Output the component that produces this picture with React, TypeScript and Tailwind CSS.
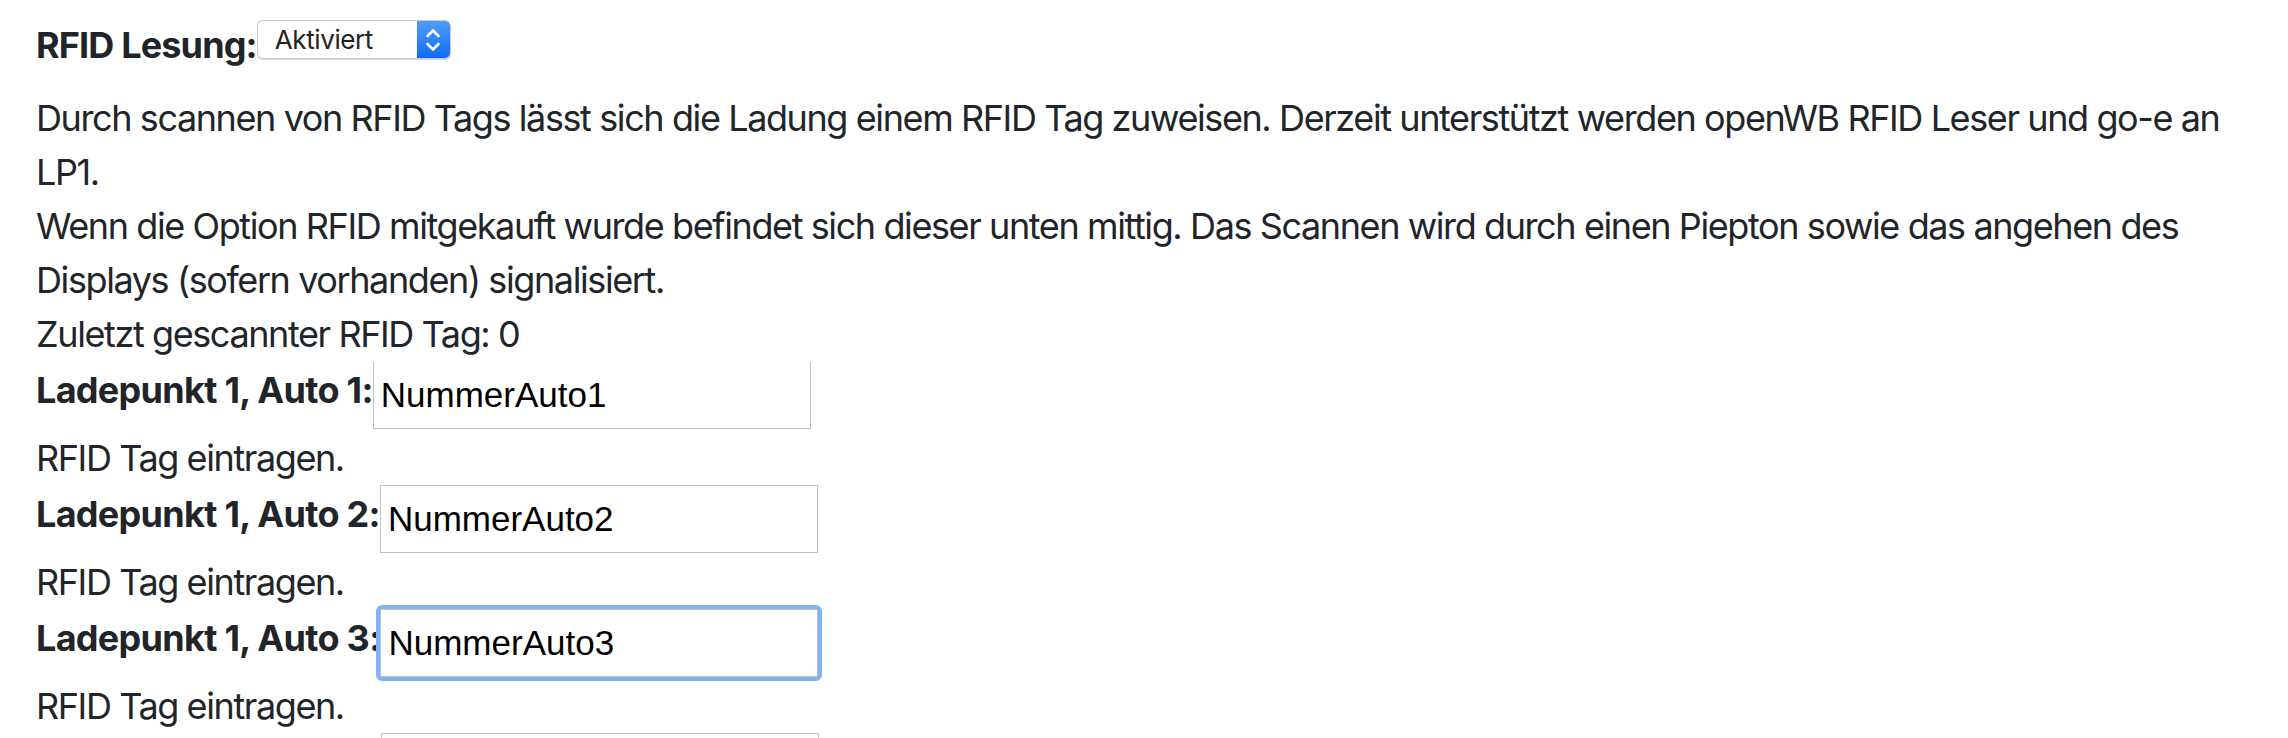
import React from "react";

const cars = [
  { label: "Ladepunkt 1, Auto 1:", value: "NummerAuto1", first: true },
  { label: "Ladepunkt 1, Auto 2:", value: "NummerAuto2" },
  { label: "Ladepunkt 1, Auto 3:", value: "NummerAuto3", focused: true },
];

function FakeSelect() {
  return (
    <div className="mt-[2px] flex h-[39px] w-[194px] overflow-hidden rounded-[6px] border border-[#c9c9c9] bg-white shadow-[0_1px_1px_rgba(0,0,0,0.18)]">
      <div className="flex flex-1 items-center pl-[17px] text-[26px] leading-none tracking-[-0.4px] text-[#222]">Aktiviert</div>
      <div className="flex w-[33px] items-center justify-center bg-gradient-to-b from-[#4f9cf9] to-[#0a6bf5]">
        <svg width="16" height="28" viewBox="0 0 16 28" fill="none" stroke="white" strokeWidth="2.6" strokeLinecap="round" strokeLinejoin="round">
          <path d="M2.5 10 L8 4.5 L13.5 10" />
          <path d="M2.5 18 L8 23.5 L13.5 18" />
        </svg>
      </div>
    </div>
  );
}

function TagInput({ value, first }: { value: string; first?: boolean }) {
  return (
    <input
      readOnly
      value={value}
      className={`h-[68px] w-[438px] border border-[#c2c2c2] bg-white pl-[7px] text-[35px] tracking-normal text-black outline-none font-['Liberation_Sans',Arial,sans-serif] ${first ? "border-t-transparent" : ""}`}
    />
  );
}

function CarRow({ label, value, first, focused }: { label: string; value: string; first?: boolean; focused?: boolean }) {
  return (
    <>
      <div className="flex h-[70px] items-start">
        <label className="pt-[2px] font-bold tracking-[-0.7px]">{label}</label>
        {focused ? (
          <span className="relative flex">
            <TagInput value={value} />
            <span className="pointer-events-none absolute -inset-[4px] rounded-[6px] border-4 border-[#80b3f5]" />
          </span>
        ) : (
          <TagInput value={value} first={first} />
        )}
      </div>
      <div>RFID Tag eintragen.</div>
    </>
  );
}

export default function App() {
  return (
    <div className="h-[738px] overflow-hidden bg-white pl-[36px] pr-[20px] font-['Inter','Noto_Sans',sans-serif] text-[36px] leading-[54px] tracking-[-1.4px] text-[#212529]">
      {/* RFID Lesung */}
      <div className="flex h-[91px] items-start pt-[18px]">
        <label className="font-bold tracking-[-0.85px]">RFID Lesung:</label>
        <FakeSelect />
      </div>

      <div>
        Durch scannen von RFID Tags lässt sich die Ladung einem RFID Tag zuweisen. Derzeit unterstützt werden openWB RFID Leser und go-e an LP1.
      </div>
      <div>
        Wenn die Option RFID mitgekauft wurde befindet sich dieser unten mittig. Das Scannen wird durch einen Piepton sowie das angehen des Displays (sofern vorhanden) signalisiert.
      </div>
      <div>Zuletzt gescannter RFID Tag: 0</div>

      {cars.map((c) => (
        <CarRow key={c.label} {...c} />
      ))}

      {/* next row, only its input edge is in view */}
      <div className="flex h-[70px] items-start">
        <div className="w-[345px]" />
        <TagInput value="" />
      </div>
    </div>
  );
}
